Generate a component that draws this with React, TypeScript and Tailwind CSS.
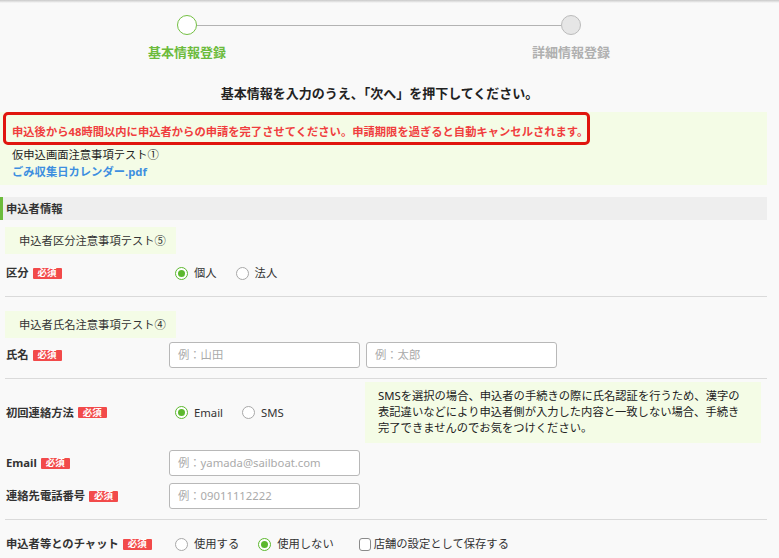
import React from "react";

const font = { fontFamily: '"Noto Sans", "Noto Sans CJK JP", sans-serif' };

const Required = () => (
  <span className="ml-[4px] inline-flex h-[11px] items-center rounded-[1px] bg-[#f24a4a] px-[5px] text-[9.5px] font-bold leading-none text-white">
    必須
  </span>
);

const Label = ({ text }: { text: string }) => (
  <div className="flex w-[169px] shrink-0 items-center pl-[6px] font-bold text-[#333]">
    {text}
    <Required />
  </div>
);

const Radio = ({ label, checked }: { label: string; checked?: boolean }) => (
  <div className="flex items-center gap-[6px]">
    <span
      className={
        checked
          ? "flex h-[13px] w-[13px] items-center justify-center rounded-full border border-[#5cb82e] bg-white"
          : "flex h-[13px] w-[13px] items-center justify-center rounded-full border border-[#a8a8a8] bg-white"
      }
    >
      {checked && <span className="h-[7px] w-[7px] rounded-full bg-[#5cb82e]" />}
    </span>
    <span className="text-[#333]">{label}</span>
  </div>
);

const Input = ({ placeholder }: { placeholder: string }) => (
  <div className="flex h-[26px] w-[191px] items-center rounded-[3px] border border-[#b8b8b8] bg-white px-[8px] text-[#aaa]">
    {placeholder}
  </div>
);

const Note = ({ text }: { text: string }) => (
  <div className="ml-[5px] flex h-[27px] w-[171px] items-center bg-[#f4fce6] pl-[14px] text-[#333]">
    {text}
  </div>
);

const Hr = ({ className }: { className: string }) => (
  <div className={"ml-[5px] h-px bg-[#dadada] " + className} />
);

export default function App() {
  return (
    <div style={font} className="h-[558px] w-[779px] overflow-hidden bg-[#f9f9f9] text-[11.3px] leading-[16px]">
      <div className="h-[3px] bg-linear-to-b from-[#c9c9c9] to-[#f9f9f9]" />

      <div className="w-[767px]">
        {/* stepper */}
        <div className="mt-[12px] flex items-center pl-[177px]">
          <span className="h-[20px] w-[20px] rounded-full border-[1.5px] border-[#74c043] bg-white" />
          <span className="h-px w-[364px] bg-[#b3b3b3]" />
          <span className="h-[20px] w-[20px] rounded-full border border-[#bbb] bg-[#e6e6e6]" />
        </div>
        <div className="mt-[9px] flex pl-[137px] text-[13px] font-bold leading-[16px]">
          <span className="w-[100px] text-center text-[#6cbb3c]">基本情報登録</span>
          <span className="ml-[284px] w-[100px] text-center text-[#b0b0b0]">詳細情報登録</span>
        </div>

        <div className="mt-[23px] pr-[8px] text-center text-[13px] font-bold leading-[20px] text-[#222]">
          基本情報を入力のうえ、「次へ」を押下してください。
        </div>

        {/* notice */}
        <div className="mt-[14px] bg-[#f4fce6] pb-[5px] pl-[12px]">
          <div className="-mt-[5px] -ml-[9px] w-[587px] whitespace-nowrap rounded-[5px] border-[3px] border-[#e0160e] px-[6px] pt-[9px] pb-[2px] font-bold text-[#f03e3e]">
            申込後から48時間以内に申込者からの申請を完了させてください。申請期限を過ぎると自動キャンセルされます。
          </div>
          <div className="mt-px leading-[17px] text-[#222]">仮申込画面注意事項テスト①</div>
          <div className="font-bold leading-[17px] text-[#3d8fe0]">ごみ収集日カレンダー.pdf</div>
        </div>

        {/* section header */}
        <div className="mt-[12px] h-[23px] border-l-[3px] border-[#6cbb3c] bg-[#eeeeee] pl-[3px] font-bold leading-[23px] text-[#333]">
          申込者情報
        </div>

        <div className="mt-[7px]">
          <Note text="申込者区分注意事項テスト⑤" />
        </div>
        <div className="flex h-[38px] items-center">
          <Label text="区分" />
          <div className="flex items-center gap-[19px] pl-[6px]">
            <Radio label="個人" checked />
            <Radio label="法人" />
          </div>
        </div>
        <Hr className="mt-[4px]" />

        <div className="mt-[14px]">
          <Note text="申込者氏名注意事項テスト④" />
        </div>
        <div className="mt-[4px] flex items-center">
          <Label text="氏名" />
          <div className="flex gap-[6px]">
            <Input placeholder="例：山田" />
            <Input placeholder="例：太郎" />
          </div>
        </div>
        <Hr className="mt-[10px]" />

        <div className="mt-[3px] flex items-center">
          <Label text="初回連絡方法" />
          <div className="flex w-[196px] items-center gap-[19px] pl-[6px]">
            <Radio label="Email" checked />
            <Radio label="SMS" />
          </div>
          <div className="w-[396px] bg-[#f4fce6] px-[13px] pt-[6px] pb-[7px] text-[#222]">
            SMSを選択の場合、申込者の手続きの際に氏名認証を行うため、漢字の表記違いなどにより申込者側が入力した内容と一致しない場合、手続き完了できませんのでお気をつけください。
          </div>
        </div>

        <div className="mt-[7px] flex items-center">
          <Label text="Email" />
          <Input placeholder="例：yamada@sailboat.com" />
        </div>
        <div className="mt-[7px] flex items-center">
          <Label text="連絡先電話番号" />
          <Input placeholder="例：09011112222" />
        </div>
        <Hr className="mt-[10px]" />

        <div className="mt-[14px] flex h-[20px] items-center">
          <Label text="申込者等とのチャット" />
          <div className="flex items-center gap-[19px] pl-[6px]">
            <Radio label="使用する" />
            <Radio label="使用しない" checked />
            <div className="ml-[6px] flex items-center gap-[3px]">
              <span className="h-[13px] w-[12px] rounded-[3px] border border-[#8a8a8a] bg-white" />
              <span className="text-[#333]">店舗の設定として保存する</span>
            </div>
          </div>
        </div>
      </div>
    </div>
  );
}
